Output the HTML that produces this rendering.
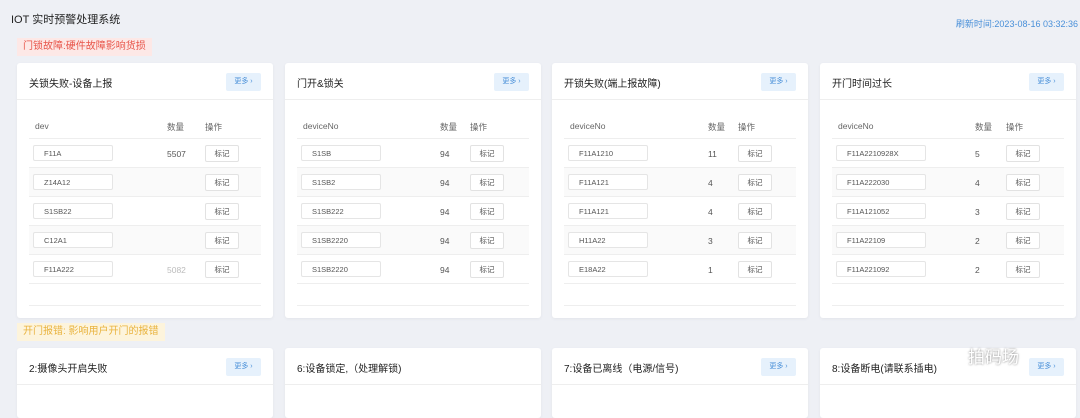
<!DOCTYPE html>
<html><head><meta charset="utf-8"><style>
*{margin:0;padding:0;box-sizing:border-box}
body{width:1080px;height:404px;overflow:hidden;background:#eef0f5;font-family:"Liberation Sans","Noto Sans CJK SC",sans-serif;position:relative;color:#333}
.t{position:absolute;left:11px;top:11px;font-size:11px;color:#222}
.r{position:absolute;right:2px;top:17px;font-size:9px;color:#4a90d9}
.tag{position:absolute;left:17px;height:18px;line-height:18px;padding:0 6px;font-size:10px}
.card{position:absolute;width:256px;background:#fff;border-radius:3px;box-shadow:0 1px 3px rgba(0,0,0,.05)}
.hd{height:37px;border-bottom:1px solid #eee;position:relative}
.hd span{position:absolute;left:12px;top:12px;font-size:10px;color:#222}
.more{position:absolute;right:12px;top:10px;width:35px;height:18px;background:#e6f1fc;border-radius:2px;font-size:7px;color:#4a90d9;text-align:center;line-height:18px}
.tb{position:absolute;left:12px;right:12px}
.row{position:absolute;left:0;right:0;height:29px;border-bottom:1px solid #eee;font-size:8.5px;color:#555}
.row.s{background:#fafafa}
.c1{position:absolute;top:10px}
.dv{position:absolute;left:4px;top:6px;height:16px;line-height:16px;border:1px solid #e5e5e5;border-radius:2px;padding:0 12px 0 10px;font-size:7.5px;color:#555;background:#fff;width:80px}
.bt{position:absolute;top:6px;width:34px;height:17px;line-height:15px;border:1px solid #e2e2e2;border-radius:2px;text-align:center;font-size:7.5px;color:#555;background:#fff}
.h{font-size:8.5px;color:#666}
</style></head><body>
<div class="t">IOT 实时预警处理系统</div>
<div class="r">刷新时间:2023-08-16 03:32:36</div>
<div class="tag" style="top:38px;background:#fde8e6;color:#e8554a">门锁故障:硬件故障影响货损</div>
<div class="tag" style="top:323px;background:#fdf4dc;color:#e9b33e">开门报错: 影响用户开门的报错</div>

<div class="card" style="left:17px;top:63px;height:255px"><div class="hd"><span>关锁失败-设备上报</span><div class="more">更多 ›</div></div>
<div class="tb" style="top:48px">
<div class="row" style="top:0;height:28px"><span class="c1 h" style="left:6px">dev</span><span class="c1 h" style="left:138px">数量</span><span class="c1 h" style="left:176px">操作</span></div>
<div class="row" style="top:28px"><div class="dv">F11A</div><span class="c1" style="left:138px">5507</span><div class="bt" style="left:176px">标记</div></div>
<div class="row s" style="top:57px"><div class="dv">Z14A12</div><div class="bt" style="left:176px">标记</div></div>
<div class="row" style="top:86px"><div class="dv">S1SB22</div><div class="bt" style="left:176px">标记</div></div>
<div class="row s" style="top:115px"><div class="dv">C12A1</div><div class="bt" style="left:176px">标记</div></div>
<div class="row" style="top:144px"><div class="dv">F11A222</div><span class="c1" style="left:138px;color:#bbb">5082</span><div class="bt" style="left:176px">标记</div></div>
<div class="row" style="top:173px;height:22px"></div>
</div></div>

<div class="card" style="left:285px;top:63px;height:255px"><div class="hd"><span>门开&amp;锁关</span><div class="more">更多 ›</div></div>
<div class="tb" style="top:48px">
<div class="row" style="top:0;height:28px"><span class="c1 h" style="left:6px">deviceNo</span><span class="c1 h" style="left:143px">数量</span><span class="c1 h" style="left:173px">操作</span></div>
<div class="row" style="top:28px"><div class="dv">S1SB</div><span class="c1" style="left:143px">94</span><div class="bt" style="left:173px">标记</div></div>
<div class="row s" style="top:57px"><div class="dv">S1SB2</div><span class="c1" style="left:143px">94</span><div class="bt" style="left:173px">标记</div></div>
<div class="row" style="top:86px"><div class="dv">S1SB222</div><span class="c1" style="left:143px">94</span><div class="bt" style="left:173px">标记</div></div>
<div class="row s" style="top:115px"><div class="dv">S1SB2220</div><span class="c1" style="left:143px">94</span><div class="bt" style="left:173px">标记</div></div>
<div class="row" style="top:144px"><div class="dv">S1SB2220</div><span class="c1" style="left:143px">94</span><div class="bt" style="left:173px">标记</div></div>
<div class="row" style="top:173px;height:22px"></div>
</div></div>

<div class="card" style="left:552px;top:63px;height:255px"><div class="hd"><span>开锁失败(端上报故障)</span><div class="more">更多 ›</div></div>
<div class="tb" style="top:48px">
<div class="row" style="top:0;height:28px"><span class="c1 h" style="left:6px">deviceNo</span><span class="c1 h" style="left:144px">数量</span><span class="c1 h" style="left:174px">操作</span></div>
<div class="row" style="top:28px"><div class="dv">F11A1210</div><span class="c1" style="left:144px">11</span><div class="bt" style="left:174px">标记</div></div>
<div class="row s" style="top:57px"><div class="dv">F11A121</div><span class="c1" style="left:144px">4</span><div class="bt" style="left:174px">标记</div></div>
<div class="row" style="top:86px"><div class="dv">F11A121</div><span class="c1" style="left:144px">4</span><div class="bt" style="left:174px">标记</div></div>
<div class="row s" style="top:115px"><div class="dv">H11A22</div><span class="c1" style="left:144px">3</span><div class="bt" style="left:174px">标记</div></div>
<div class="row" style="top:144px"><div class="dv">E18A22</div><span class="c1" style="left:144px">1</span><div class="bt" style="left:174px">标记</div></div>
<div class="row" style="top:173px;height:22px"></div>
</div></div>

<div class="card" style="left:820px;top:63px;height:255px"><div class="hd"><span>开门时间过长</span><div class="more">更多 ›</div></div>
<div class="tb" style="top:48px">
<div class="row" style="top:0;height:28px"><span class="c1 h" style="left:6px">deviceNo</span><span class="c1 h" style="left:143px">数量</span><span class="c1 h" style="left:174px">操作</span></div>
<div class="row" style="top:28px"><div class="dv" style="width:90px">F11A2210928X</div><span class="c1" style="left:143px">5</span><div class="bt" style="left:174px">标记</div></div>
<div class="row s" style="top:57px"><div class="dv" style="width:90px">F11A222030</div><span class="c1" style="left:143px">4</span><div class="bt" style="left:174px">标记</div></div>
<div class="row" style="top:86px"><div class="dv" style="width:90px">F11A121052</div><span class="c1" style="left:143px">3</span><div class="bt" style="left:174px">标记</div></div>
<div class="row s" style="top:115px"><div class="dv" style="width:90px">F11A22109</div><span class="c1" style="left:143px">2</span><div class="bt" style="left:174px">标记</div></div>
<div class="row" style="top:144px"><div class="dv" style="width:90px">F11A221092</div><span class="c1" style="left:143px">2</span><div class="bt" style="left:174px">标记</div></div>
<div class="row" style="top:173px;height:22px"></div>
</div></div>

<div class="card" style="left:17px;top:348px;height:70px"><div class="hd"><span>2:摄像头开启失败</span><div class="more">更多 ›</div></div></div>
<div class="card" style="left:285px;top:348px;height:70px"><div class="hd"><span>6:设备锁定,（处理解锁)</span></div></div>
<div class="card" style="left:552px;top:348px;height:70px"><div class="hd"><span>7:设备已离线（电源/信号)</span><div class="more">更多 ›</div></div></div>
<div class="card" style="left:820px;top:348px;height:70px"><div class="hd"><span>8:设备断电(请联系插电)</span><div class="more">更多 ›</div></div></div>
<div style="position:absolute;left:968px;top:343px;font-size:17px;color:#fff;text-shadow:0 0 2px #777">拍码场</div>
</body></html>
